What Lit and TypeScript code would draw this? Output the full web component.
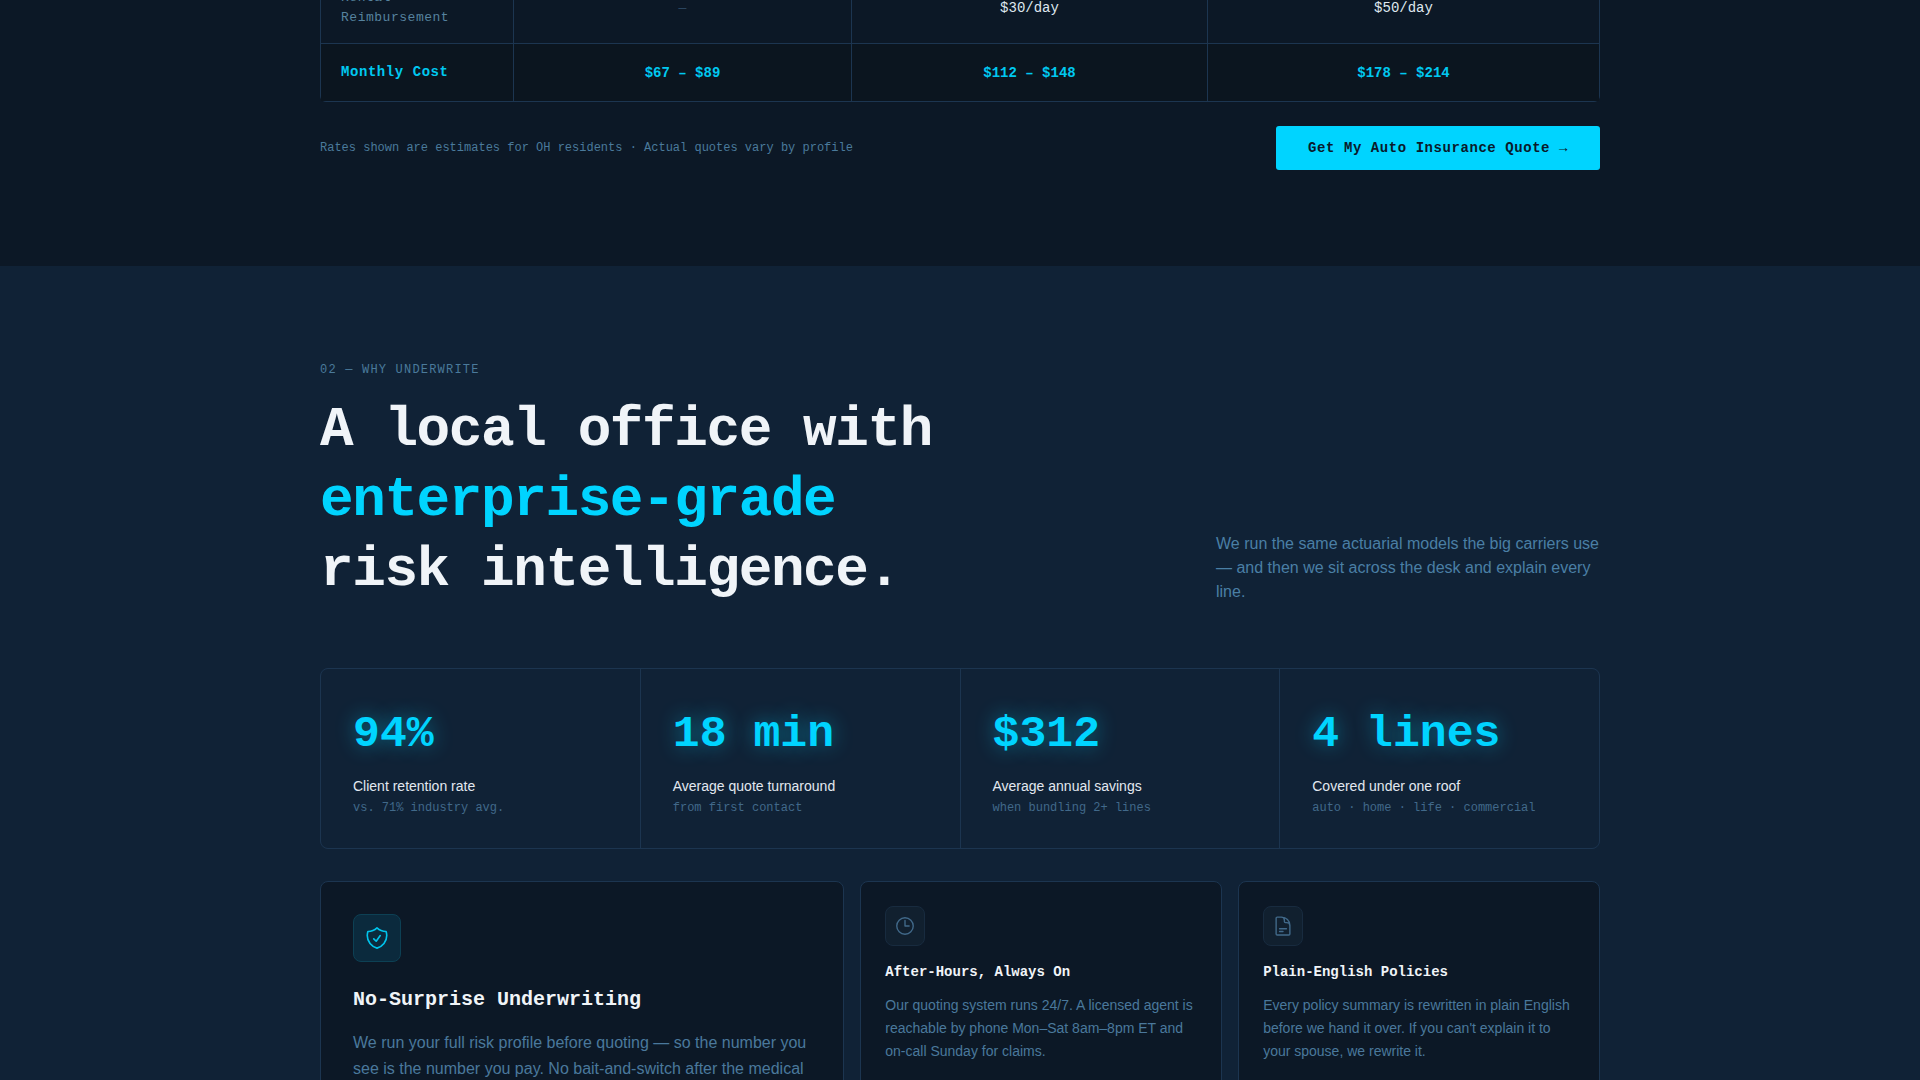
import { LitElement, html, css, svg } from "lit";
import { customElement } from "lit/decorators.js";

const shield = svg`<path d="M9 12.75 11.25 15 15 9.75m-3-7.036A11.959 11.959 0 0 1 3.598 6 11.99 11.99 0 0 0 3 9.749c0 5.592 3.824 10.29 9 11.623 5.176-1.332 9-6.03 9-11.622 0-1.31-.21-2.571-.598-3.751h-.152c-3.196 0-6.1-1.248-8.25-3.285Z"/>`;
const clock = svg`<path d="M12 6v6h4.5m4.5 0a9 9 0 1 1-18 0 9 9 0 0 1 18 0Z"/>`;
const file = svg`<path d="M19.5 14.25v-2.625a3.375 3.375 0 0 0-3.375-3.375h-1.5A1.125 1.125 0 0 1 13.5 7.125v-1.5a3.375 3.375 0 0 0-3.375-3.375H8.25m0 12.75h7.5m-7.5 3H12M10.5 2.25H5.625c-.621 0-1.125.504-1.125 1.125v17.25c0 .621.504 1.125 1.125 1.125h12.75c.621 0 1.125-.504 1.125-1.125V11.25a9 9 0 0 0-9-9Z"/>`;

const stats = [
  ["94%", "Client retention rate", "vs. 71% industry avg."],
  ["18 min", "Average quote turnaround", "from first contact"],
  ["$312", "Average annual savings", "when bundling 2+ lines"],
  ["4 lines", "Covered under one roof", "auto · home · life · commercial"],
];

@customElement("app-root")
export class AppRoot extends LitElement {
  static styles = css`
    :host { display: block; }
    * { box-sizing: border-box; }
    .page { height: 1080px; overflow: hidden; background: #102236; }
    .mono { font-family: "Liberation Mono", monospace; }
    .wrap { width: 1280px; margin: 0 auto; }
    .compare { background: #0c1826; height: 266px; display: flow-root; }
    .table {
      margin-top: -29px;
      border: 1px solid #1c3550;
      border-radius: 6px;
      display: grid;
      grid-template-columns: 192px 338px 356px 392px;
      font-family: "Liberation Mono", monospace;
    }
    .cell {
      display: flex; align-items: center; justify-content: center;
      padding: 18px 20px 16px;
      font-size: 14px; line-height: 19.5px;
      color: #dfe7ef;
      border-left: 1px solid #1c3550;
    }
    .cell.lab {
      justify-content: flex-start; border-left: 0; padding-top: 16px;
      font-size: 13px; letter-spacing: .04em; color: #56839f;
    }
    .dash { color: #2a455f; font-size: 13px; padding-top: 19px; }
    .cost { background: #0b151f; border-top: 1px solid #1c3550; color: #00c8f0; font-weight: 700; height: 58px; padding: 3px 20px 0; }
    .cell.lab.cost { font-size: 14px; letter-spacing: .04em; color: #00c8f0; padding: 1px 20px 0; border-left: 0; }
    .foot { display: flex; justify-content: space-between; align-items: center; margin-top: 24px; }
    .note { font-size: 12px; color: #4a7a9b; }
    .btn {
      height: 44px; padding: 0 32px; border: 0; border-radius: 3px;
      background: #00d4ff; color: #0a1a2b;
      font: 700 14px "Liberation Mono", monospace; letter-spacing: .04em;
      display: flex; align-items: center;
    }
    .why { padding-top: 97px; }
    .eyebrow { font-size: 12px; line-height: 14px; letter-spacing: .1em; color: #4a7a9b; }
    .head { display: flex; justify-content: space-between; align-items: flex-end; margin-top: 18px; }
    h2 {
      margin: 0; font: 700 56px/70px "Liberation Mono", monospace;
      letter-spacing: -.025em; color: #f0f4f8;
    }
    h2 em { font-style: normal; color: #00d4ff; }
    .lead { margin: 0 0 1.5px; width: 384px; font: 16px/24px "Liberation Sans", sans-serif; color: #4a7fa5; }
    .stats {
      margin-top: 63px; height: 181px;
      display: grid; grid-template-columns: repeat(4, 1fr); gap: 1px;
      background: #1c3550;
      border: 1px solid #1c3550; border-radius: 8px; overflow: hidden;
    }
    .stat { padding: 38px 32px 0; background: #102236; }
    .val {
      font: 700 44.8px/54px "Liberation Mono", monospace; color: #00d4ff;
      text-shadow: 0 0 20px rgba(0, 212, 255, .45);
    }
    .slab { margin-top: 15px; font: 14px/20px "Liberation Sans", sans-serif; color: #e2e8f0; }
    .ssub { margin-top: 4px; font-size: 12px; line-height: 16px; color: #41698a; }
    .cards { margin-top: 32px; display: grid; grid-template-columns: 1.449fr 1fr 1fr; gap: 16px; }
    .card { background: #0c1826; border: 1px solid #1c3550; border-radius: 8px; padding: 24px; }
    .card.big { padding: 32px; }
    .ico {
      width: 40px; height: 40px; border-radius: 8px;
      display: flex; align-items: center; justify-content: center;
      background: #11202f; border: 1px solid #182b3f; color: #41698a;
    }
    .big .ico { width: 48px; height: 48px; background: #0b2a3d; border-color: #0d4054; color: #00c4ec; }
    .ico svg { width: 22px; height: 22px; fill: none; stroke: currentColor; stroke-width: 1.5; stroke-linecap: round; stroke-linejoin: round; }
    .big .ico svg { width: 26px; height: 26px; }
    h3 { margin: 17px 0 0; font: 700 14px/18px "Liberation Mono", monospace; color: #f0f4f8; }
    .big h3 { margin-top: 26px; font-size: 20px; line-height: 24px; }
    p.body { margin: 13px 0 0; font: 14px/23.1px "Liberation Sans", sans-serif; color: #4a789c; }
    .big p.body { margin-top: 17.5px; font-size: 16px; line-height: 26.4px; }
  `;

  private card(icon: unknown, title: string, body: string, big = false) {
    return html`<div class="card ${big ? "big" : ""}">
      <div class="ico"><svg viewBox="0 0 24 24">${icon}</svg></div>
      <h3>${title}</h3>
      <p class="body">${body}</p>
    </div>`;
  }

  render() {
    return html`<div class="page">
      <section class="compare">
        <div class="wrap">
          <div class="table">
            <div class="cell lab">Rental<br />Reimbursement</div>
            <div class="cell dash">—</div>
            <div class="cell">$30/day</div>
            <div class="cell">$50/day</div>
            <div class="cell lab cost">Monthly Cost</div>
            <div class="cell cost">$67 – $89</div>
            <div class="cell cost">$112 – $148</div>
            <div class="cell cost">$178 – $214</div>
          </div>
          <div class="foot">
            <span class="note mono">Rates shown are estimates for OH residents · Actual quotes vary by profile</span>
            <button class="btn">Get My Auto Insurance Quote →</button>
          </div>
        </div>
      </section>
      <section class="why">
        <div class="wrap">
          <div class="eyebrow mono">02 — WHY UNDERWRITE</div>
          <div class="head">
            <h2>A local office with<br /><em>enterprise-grade</em><br />risk intelligence.</h2>
            <p class="lead">We run the same actuarial models the big carriers use — and then we sit across the desk and explain every line.</p>
          </div>
          <div class="stats">
            ${stats.map(
              ([v, l, s]) => html`<div class="stat">
                <div class="val">${v}</div>
                <div class="slab">${l}</div>
                <div class="ssub mono">${s}</div>
              </div>`
            )}
          </div>
          <div class="cards">
            ${this.card(shield, "No-Surprise Underwriting", "We run your full risk profile before quoting — so the number you see is the number you pay. No bait-and-switch after the medical", true)}
            ${this.card(clock, "After-Hours, Always On", "Our quoting system runs 24/7. A licensed agent is reachable by phone Mon–Sat 8am–8pm ET and on-call Sunday for claims.")}
            ${this.card(file, "Plain-English Policies", "Every policy summary is rewritten in plain English before we hand it over. If you can't explain it to your spouse, we rewrite it.")}
          </div>
        </div>
      </section>
    </div>`;
  }
}
